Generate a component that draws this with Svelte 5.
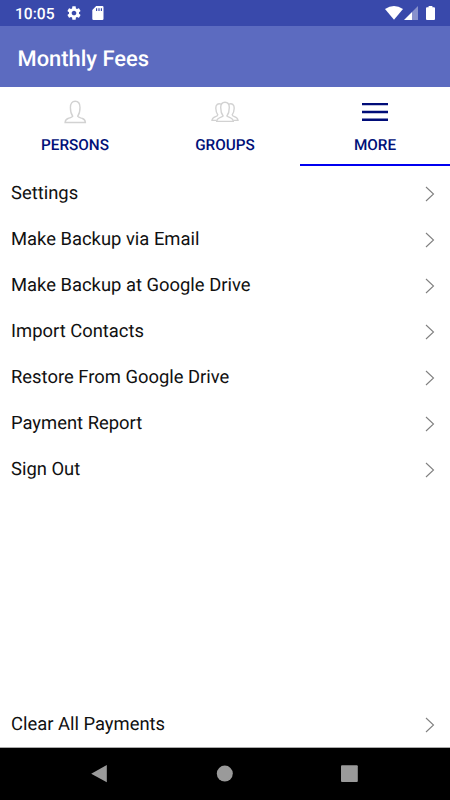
<script lang="ts">
  interface Tab {
    id: string;
    label: string;
  }

  const tabs: Tab[] = [
    { id: 'persons', label: 'PERSONS' },
    { id: 'groups', label: 'GROUPS' },
    { id: 'more', label: 'MORE' },
  ];

  const items = [
    'Settings',
    'Make Backup via Email',
    'Make Backup at Google Drive',
    'Import Contacts',
    'Restore From Google Drive',
    'Payment Report',
    'Sign Out',
  ];

  let activeTab = $state('more');
</script>

{#snippet row(text: string)}
  <button class="row" type="button">
    <span>{text}</span>
    <svg class="arrow" width="10" height="16" viewBox="0 0 10 16">
      <path d="M1 1l7.5 7L1 15" />
    </svg>
  </button>
{/snippet}

<div class="screen">
  <div class="status">
    <span class="time">10:05</span>
    <svg class="gear" width="16" height="16" viewBox="0 0 24 24">
      <path
        d="M19.43 12.98c.04-.32.07-.64.07-.98s-.03-.66-.07-.98l2.11-1.65c.19-.15.24-.42.12-.64l-2-3.46c-.12-.22-.39-.3-.61-.22l-2.49 1c-.52-.4-1.08-.73-1.69-.98l-.38-2.65C14.46 2.18 14.25 2 14 2h-4c-.25 0-.46.18-.49.42l-.38 2.65c-.61.25-1.17.59-1.69.98l-2.49-1c-.23-.09-.49 0-.61.22l-2 3.46c-.13.22-.07.49.12.64l2.11 1.65c-.04.32-.07.65-.07.98s.03.66.07.98l-2.11 1.65c-.19.15-.24.42-.12.64l2 3.46c.12.22.39.3.61.22l2.49-1c.52.4 1.08.73 1.69.98l.38 2.65c.03.24.24.42.49.42h4c.25 0 .46-.18.49-.42l.38-2.65c.61-.25 1.17-.59 1.69-.98l2.49 1c.23.09.49 0 .61-.22l2-3.46c.12-.22.07-.49-.12-.64l-2.11-1.65zM12 15.5c-1.93 0-3.5-1.57-3.5-3.5s1.57-3.5 3.5-3.5 3.5 1.57 3.5 3.5-1.57 3.5-3.5 3.5z"
      />
    </svg>
    <svg class="card" width="12" height="14" viewBox="0 0 12 14">
      <path
        fill-rule="evenodd"
        d="M4.2 0H10.3Q11.5 0 11.5 1.2V12.8Q11.5 14 10.3 14H1.5Q.3 14 .3 12.8V4ZM4 2.2V5H5.2V2.2ZM6.4 2.2V5H7.6V2.2ZM8.8 2.2V5H10V2.2Z"
      />
    </svg>
    <div class="signals">
      <svg width="18" height="14" viewBox="0 0 18 14">
        <path d="M0 3Q9-3 18 3L9 13.8Z" />
      </svg>
      <svg class="cell" width="14" height="14" viewBox="0 0 14 14">
        <path d="M14 0V14H8V6Z" opacity=".4" />
        <path d="M8 6V14H0Z" />
      </svg>
      <svg class="battery" width="9" height="14" viewBox="0 0 9 14">
        <path d="M2.6 0H6.4V1.3H8Q9 1.3 9 2.3V13Q9 14 8 14H1Q0 14 0 13V2.3Q0 1.3 1 1.3H2.6Z" />
      </svg>
    </div>
  </div>

  <header class="title">Monthly Fees</header>

  <nav class="tabs">
    {#each tabs as tab}
      <button
        class="tab"
        class:active={activeTab === tab.id}
        type="button"
        onclick={() => (activeTab = tab.id)}
      >
        <svg class="tab-icon" width="28" height="26" viewBox="0 0 28 26">
          {#if tab.id === 'persons'}
            <path
              class="outline"
              d="M11.7 17.2C10.2 15.2 9.4 12.7 9.4 8.5C9.4 4.5 11.2 2.3 14.2 2.3S19 4.5 19 8.5C19 12.7 18.2 15.2 16.7 17.2C17.2 18.5 19.3 18.6 21.5 19.5C24 20.5 24.3 21.8 24.4 23.5H4.1C4.2 21.8 4.5 20.5 7 19.5C9.2 18.6 11.2 18.5 11.7 17.2Z"
            />
          {:else if tab.id === 'groups'}
            <path
              class="outline"
              d="M12.1 17C10.4 14.8 9.7 12 9.7 8.5C9.7 5.2 11.2 3.2 14 3.2S18.3 5.2 18.3 8.5C18.3 12 17.6 14.8 15.9 17C16.6 18.5 22 18 22.3 22.4H5.7C6 18 11.4 18.5 12.1 17Z"
            />
            <path
              class="outline"
              d="M10.2 5.2C7.1 3.7 4.6 5.8 4.8 9.3C4.9 12.5 5.6 14.2 6.8 15.8C6.6 18.3 1.4 17 1 21.4H5.5M17.8 5.2C20.9 3.7 23.4 5.8 23.2 9.3C23.1 12.5 22.4 14.2 21.2 15.8C21.4 18.3 26.6 17 27 21.4H22.5"
            />
          {:else}
            <path class="bars" d="M1 5.1H27M1 13H27M1 20.8H27" />
          {/if}
        </svg>
        <span>{tab.label}</span>
      </button>
    {/each}
  </nav>

  <main class="list">
    {#each items as item}
      {@render row(item)}
    {/each}
    <div class="bottom">
      {@render row('Clear All Payments')}
    </div>
  </main>

  <footer class="navbar">
    <svg width="18" height="20" viewBox="0 0 18 20">
      <path d="M1.2 9.8L16.8.9V18.3Z" />
    </svg>
    <svg width="18" height="20" viewBox="0 0 18 20">
      <circle cx="9.8" cy="9.6" r="8" />
    </svg>
    <svg width="18" height="20" viewBox="0 0 18 20">
      <rect x="1" y="1.3" width="16.8" height="16.8" rx="1" />
    </svg>
  </footer>
</div>

<style>
  :global(body) {
    background: #fff;
  }

  .screen {
    display: flex;
    flex-direction: column;
    width: 450px;
    height: 800px;
    overflow: hidden;
    font-family: Roboto, sans-serif;
    text-rendering: geometricPrecision;
    background: #fff;
  }

  svg {
    display: block;
    flex: none;
    overflow: visible;
  }

  button {
    margin: 0;
    border: none;
    background: none;
    font-family: inherit;
    text-rendering: inherit;
    cursor: pointer;
  }

  .status {
    display: flex;
    align-items: center;
    height: 26px;
    padding: 0 15px;
    box-sizing: border-box;
    background: #3949ab;
    color: #fff;
    fill: #fff;
  }

  .time {
    width: 51px;
    padding-top: 2px;
    font-size: 15.6px;
    font-weight: 500;
    line-height: 26px;
  }

  .card {
    margin-left: 10px;
  }

  .signals {
    display: flex;
    margin-left: auto;
  }

  .cell {
    margin-left: 1px;
  }

  .battery {
    margin-left: 8px;
  }

  .title {
    height: 61px;
    padding: 4px 17.5px 0;
    box-sizing: border-box;
    background: #5c6bc0;
    color: #fff;
    font-size: 21.9px;
    font-weight: 500;
    line-height: 60px;
  }

  .tabs {
    display: grid;
    grid-template-columns: repeat(3, 1fr);
    height: 79px;
  }

  .tab {
    display: flex;
    flex-direction: column;
    align-items: center;
    padding: 12px 0 0;
    border-bottom: 2px solid transparent;
    color: #001078;
    font-size: 15.3px;
    font-weight: 500;
    line-height: 20px;
  }

  .tab.active {
    border-bottom-color: #0000f0;
  }

  .tab-icon {
    margin-bottom: 10px;
  }

  .outline {
    fill: none;
    stroke: #d2d2d2;
    stroke-width: 1.4;
  }

  .bars {
    fill: none;
    stroke: #000c78;
    stroke-width: 2.4;
  }

  .list {
    display: flex;
    flex: 1;
    flex-direction: column;
    padding-top: 4px;
  }

  .row {
    display: flex;
    align-items: center;
    justify-content: space-between;
    width: 100%;
    height: 46px;
    padding: 0 15px 0 11px;
    color: #111;
    font-size: 18.4px;
    line-height: 24px;
    text-align: left;
  }

  .row span {
    padding-top: 1px;
  }

  .arrow {
    margin-top: 2px;
    fill: none;
    stroke: #808080;
    stroke-width: 1.1;
  }

  .bottom {
    margin-top: auto;
  }

  .navbar {
    display: flex;
    justify-content: space-between;
    height: 53px;
    padding: 16px 92px 0 90px;
    box-sizing: border-box;
    border-top: 1px solid #aaa;
    background: #000;
    fill: #9a9a9a;
  }
</style>
